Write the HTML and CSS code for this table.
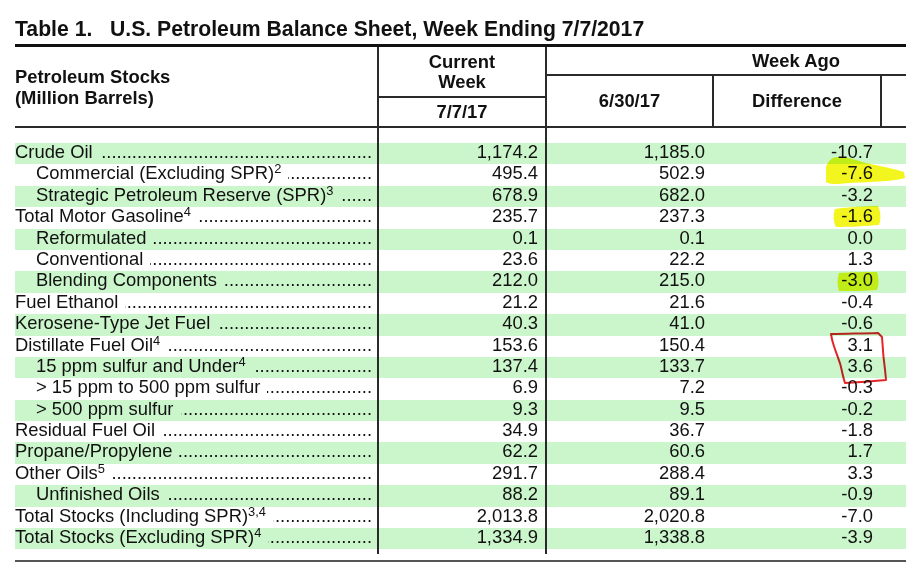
FILE: index.html
```html
<!DOCTYPE html>
<html lang="en">
<head>
<meta charset="utf-8">
<title>Table 1. U.S. Petroleum Balance Sheet</title>
<link rel="stylesheet" href="styles.css">
</head>
<body>
<div class="page">
  <h1 class="title">Table 1.&nbsp;&nbsp; U.S. Petroleum Balance Sheet, Week Ending 7/7/2017</h1>
  <div class="sheet">
    <div class="head">
      <div class="h h-label">Petroleum Stocks<br>(Million Barrels)</div>
      <div class="h h-cur">Current<br>Week</div>
      <div class="h h-date">7/7/17</div>
      <div class="h h-ago">Week Ago</div>
      <div class="h h-prev">6/30/17</div>
      <div class="h h-diff">Difference</div>
      <div class="h h-pct"></div>
    </div>
    <div class="body">
      <div class="row spacer top"><div class="c"></div><div class="c v"></div><div class="c v"></div><div class="c"></div><div class="c"></div></div>

      <div class="row g"><div class="c lab"><span class="lbl">Crude Oil</span><span class="dots"></span></div><div class="c v n">1,174.2</div><div class="c v n">1,185.0</div><div class="c n">-10.7</div><div class="c"></div></div>
      <div class="row"><div class="c lab in"><span class="lbl">Commercial (Excluding SPR)<sup>2</sup></span><span class="dots"></span></div><div class="c v n">495.4</div><div class="c v n">502.9</div><div class="c n">-7.6</div><div class="c"></div></div>
      <div class="row g"><div class="c lab in"><span class="lbl">Strategic Petroleum Reserve (SPR)<sup>3</sup></span><span class="dots"></span></div><div class="c v n">678.9</div><div class="c v n">682.0</div><div class="c n">-3.2</div><div class="c"></div></div>
      <div class="row"><div class="c lab"><span class="lbl">Total Motor Gasoline<sup>4</sup></span><span class="dots"></span></div><div class="c v n">235.7</div><div class="c v n">237.3</div><div class="c n">-1.6</div><div class="c"></div></div>
      <div class="row g"><div class="c lab in"><span class="lbl">Reformulated</span><span class="dots"></span></div><div class="c v n">0.1</div><div class="c v n">0.1</div><div class="c n">0.0</div><div class="c"></div></div>
      <div class="row"><div class="c lab in"><span class="lbl">Conventional</span><span class="dots"></span></div><div class="c v n">23.6</div><div class="c v n">22.2</div><div class="c n">1.3</div><div class="c"></div></div>
      <div class="row g"><div class="c lab in"><span class="lbl">Blending Components</span><span class="dots"></span></div><div class="c v n">212.0</div><div class="c v n">215.0</div><div class="c n">-3.0</div><div class="c"></div></div>
      <div class="row"><div class="c lab"><span class="lbl">Fuel Ethanol</span><span class="dots"></span></div><div class="c v n">21.2</div><div class="c v n">21.6</div><div class="c n">-0.4</div><div class="c"></div></div>
      <div class="row g"><div class="c lab"><span class="lbl">Kerosene-Type Jet Fuel</span><span class="dots"></span></div><div class="c v n">40.3</div><div class="c v n">41.0</div><div class="c n">-0.6</div><div class="c"></div></div>
      <div class="row"><div class="c lab"><span class="lbl">Distillate Fuel Oil<sup>4</sup></span><span class="dots"></span></div><div class="c v n">153.6</div><div class="c v n">150.4</div><div class="c n">3.1</div><div class="c"></div></div>
      <div class="row g"><div class="c lab in"><span class="lbl">15 ppm sulfur and Under<sup>4</sup></span><span class="dots"></span></div><div class="c v n">137.4</div><div class="c v n">133.7</div><div class="c n">3.6</div><div class="c"></div></div>
      <div class="row"><div class="c lab in"><span class="lbl">&gt; 15 ppm to 500 ppm sulfur</span><span class="dots"></span></div><div class="c v n">6.9</div><div class="c v n">7.2</div><div class="c n">-0.3</div><div class="c"></div></div>
      <div class="row g"><div class="c lab in"><span class="lbl">&gt; 500 ppm sulfur</span><span class="dots"></span></div><div class="c v n">9.3</div><div class="c v n">9.5</div><div class="c n">-0.2</div><div class="c"></div></div>
      <div class="row"><div class="c lab"><span class="lbl">Residual Fuel Oil</span><span class="dots"></span></div><div class="c v n">34.9</div><div class="c v n">36.7</div><div class="c n">-1.8</div><div class="c"></div></div>
      <div class="row g"><div class="c lab"><span class="lbl">Propane/Propylene</span><span class="dots"></span></div><div class="c v n">62.2</div><div class="c v n">60.6</div><div class="c n">1.7</div><div class="c"></div></div>
      <div class="row"><div class="c lab"><span class="lbl">Other Oils<sup>5</sup></span><span class="dots"></span></div><div class="c v n">291.7</div><div class="c v n">288.4</div><div class="c n">3.3</div><div class="c"></div></div>
      <div class="row g"><div class="c lab in"><span class="lbl">Unfinished Oils</span><span class="dots"></span></div><div class="c v n">88.2</div><div class="c v n">89.1</div><div class="c n">-0.9</div><div class="c"></div></div>
      <div class="row"><div class="c lab"><span class="lbl">Total Stocks (Including SPR)<sup>3,4</sup></span><span class="dots"></span></div><div class="c v n">2,013.8</div><div class="c v n">2,020.8</div><div class="c n">-7.0</div><div class="c"></div></div>
      <div class="row g"><div class="c lab"><span class="lbl">Total Stocks (Excluding SPR)<sup>4</sup></span><span class="dots"></span></div><div class="c v n">1,334.9</div><div class="c v n">1,338.8</div><div class="c n">-3.9</div><div class="c"></div></div>

      <div class="row spacer bottom"><div class="c"></div><div class="c v"></div><div class="c v"></div><div class="c"></div><div class="c"></div></div>
    </div>
    <div class="foot-rule"></div>
  </div>
</div>
<svg class="marks" width="906" height="563" viewBox="0 0 906 563" aria-hidden="true">
  <path class="hl" d="M826,167 C828,161 832,157 838,157 C848,157 856,160 866,163 C880,166 896,169 904,172 L905,178 C896,181 872,182 850,183 C838,184 830,185 826,182 Z"/>
  <path class="hl" d="M835,209 C848,207 866,206 878,206 C881,212 881,220 879,225 C866,226 850,227 836,227 C833,221 833,214 835,209 Z"/>
  <path class="hl" d="M839,273 C852,272 866,272 877,272 C879,278 879,285 877,290 C864,291 851,291 839,291 C837,285 837,279 839,273 Z"/>
  <path class="red" d="M831,334 C846,333.5 863,333.5 878,333 L882,337 C882.5,344 883,350 883.5,357 C884.5,365 885.5,373 886,380 C872,381.5 858,382.5 845,383 C843,377 842,371 840.5,365 C838,357 835,350 833,343 C832,340 831.5,337 831,334 Z"/>
</svg>
</body>
</html>
```
FILE: styles.css
```css
html, body {
  margin: 0;
  padding: 0;
  overflow: hidden;
  background: #ffffff;
}

body {
  width: 906px;
  height: 563px;
  position: relative;
  font-family: "Liberation Sans", Arial, sans-serif;
  color: #111111;
}

.page {
  padding-left: 15px;
}

.title {
  margin: 17px 0 0 0;
  font-size: 21.2px;
  line-height: 24px;
  font-weight: bold;
  white-space: nowrap;
  height: 27px;
}

.sheet {
  --cols: 362px 168px 167px 168px 26px;
  width: 891px;
  border-top: 3px solid #111111;
}

.head {
  display: grid;
  grid-template-columns: var(--cols);
  grid-template-rows: 29px 22px 30px;
  font-size: 18.4px;
  font-weight: bold;
}

.h {
  box-sizing: border-box;
  display: flex;
  align-items: center;
  justify-content: center;
  text-align: center;
  border-bottom: 2px solid #2a2a2a;
}

.h-label {
  grid-column: 1;
  grid-row: 1 / 4;
  justify-content: flex-start;
  text-align: left;
  line-height: 21px;
}

.h-cur {
  grid-column: 2;
  grid-row: 1 / 3;
  border-left: 2px solid #2a2a2a;
  line-height: 20px;
}

.h-date {
  grid-column: 2;
  grid-row: 3;
  border-left: 2px solid #2a2a2a;
}

.h-ago {
  grid-column: 3 / 6;
  grid-row: 1;
  border-left: 2px solid #2a2a2a;
  justify-content: flex-start;
  padding-left: 205px;
}

.h-prev {
  grid-column: 3;
  grid-row: 2 / 4;
  border-left: 2px solid #2a2a2a;
}

.h-diff {
  grid-column: 4;
  grid-row: 2 / 4;
  border-left: 2px solid #2a2a2a;
}

.h-pct {
  grid-column: 5;
  grid-row: 2 / 4;
  border-left: 2px solid #2a2a2a;
}

.body {
  font-size: 18.4px;
}

.row {
  display: grid;
  grid-template-columns: var(--cols);
  height: 21.4px;
  line-height: 17.9px;
}

.row.g {
  background: #cbf6cb;
}

.row.spacer.top {
  height: 15px;
}

.row.spacer.bottom {
  height: 5px;
}

.c {
  box-sizing: border-box;
  white-space: nowrap;
}

.c.v {
  border-left: 2px solid #2a2a2a;
}

.c.n {
  text-align: right;
  padding-right: 7px;
}

.lab {
  display: flex;
  align-items: baseline;
  padding-right: 5px;
}

.lab.in {
  padding-left: 21px;
}

.lbl {
  flex-shrink: 0;
}

.lbl sup {
  font-size: 0.7em;
  vertical-align: 0.45em;
  line-height: 0;
}

.dots {
  flex: 1 1 auto;
  min-width: 0;
  display: flex;
  justify-content: flex-end;
  overflow: hidden;
  margin-left: 7px;
}

.dots::after {
  content: "..............................................................................................................";
  flex-shrink: 0;
}

.foot-rule {
  margin-top: 6px;
  border-top: 2px solid #555555;
}

.marks {
  position: absolute;
  left: 0;
  top: 0;
  pointer-events: none;
  mix-blend-mode: multiply;
}

.hl {
  fill: #f2f51e;
}

.red {
  fill: none;
  stroke: #e42626;
  stroke-width: 2;
  stroke-linejoin: round;
}
```
